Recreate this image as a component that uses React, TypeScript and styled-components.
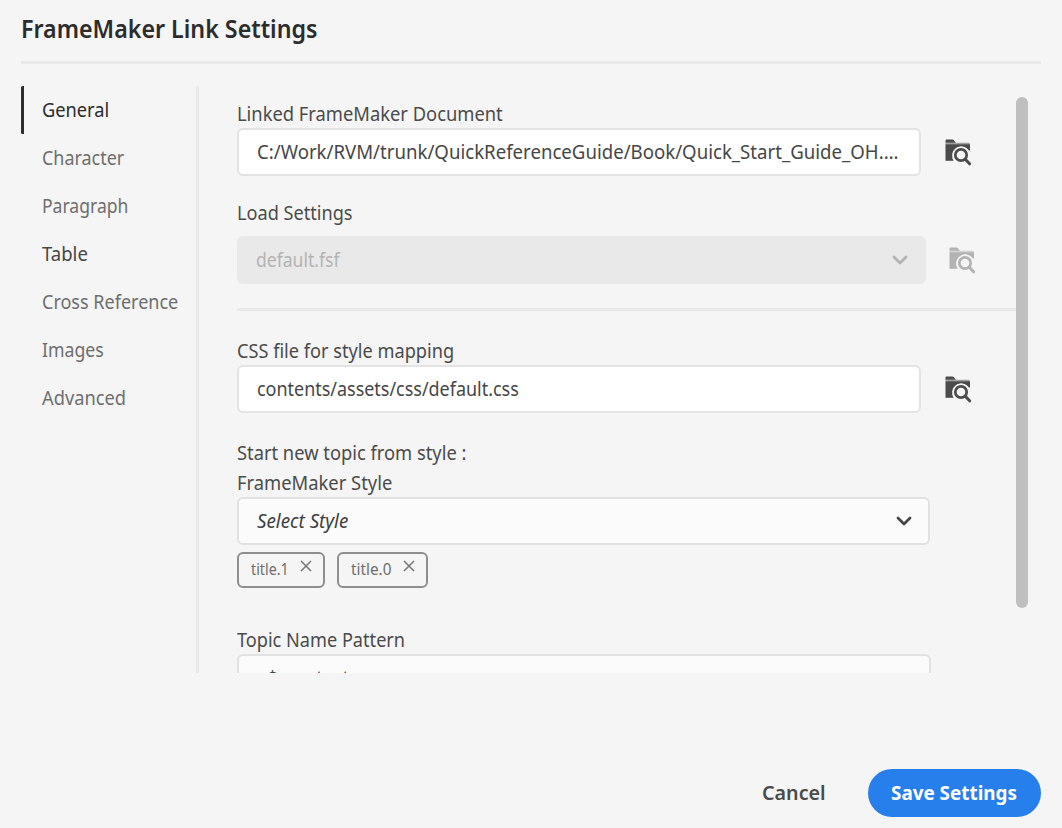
import React from "react";
import styled, { createGlobalStyle } from "styled-components";

const GlobalStyle = createGlobalStyle`
  * { box-sizing: border-box; }
  body {
    margin: 0;
    background: #f5f5f5;
    font-family: "Noto Sans", "Open Sans", sans-serif;
    font-size: 19.5px;
    color: #4b4b4b;
  }
`;

const Dialog = styled.main`
  width: 1062px;
  height: 828px;
  padding: 0 21px;
  display: flex;
  flex-direction: column;
  background: #f5f5f5;
  overflow: hidden;
`;

/* Condensed run of text: the face is narrowed horizontally by $k. */
const Text = styled.span<{ $k: number }>`
  display: inline-block;
  white-space: pre;
  transform: scaleX(${(p) => p.$k});
  transform-origin: left center;
`;

const Title = styled.h1`
  margin: 0;
  height: 64px;
  border-bottom: 3px solid #e9e9e9;
  font-size: 25px;
  font-weight: 600;
  line-height: 56px;
  color: #2c2c2c;
`;

const Body = styled.div`
  display: flex;
  height: 587px;
  margin-top: 22px;
`;

const Nav = styled.nav`
  width: 175px;
  flex: none;
`;

const NavItem = styled.a<{ $active?: boolean; $dark?: boolean }>`
  display: block;
  height: 48px;
  padding-left: 21px;
  line-height: 48px;
  color: ${(p) => (p.$active ? "#2c2c2c" : p.$dark ? "#464646" : "#6e6e6e")};
  background: ${(p) =>
    p.$active ? "linear-gradient(#2c2c2c, #2c2c2c) left / 3px 100% no-repeat" : "none"};
  border-radius: 1.5px;
`;

const Panel = styled.section`
  width: 820px;
  flex: none;
  padding: 12px 0 0 38px;
  border-left: 3px solid #e9e9e9;
  overflow: hidden;
`;

const Label = styled.div<{ $top?: number }>`
  height: 30px;
  line-height: 32px;
  margin-top: ${(p) => p.$top ?? 0}px;
  color: #4b4b4b;
`;

const Row = styled.div<{ $gap?: number; $top?: number }>`
  display: flex;
  align-items: center;
  gap: ${(p) => p.$gap ?? 24}px;
  margin-top: ${(p) => p.$top ?? 0}px;
`;

const Input = styled.div`
  width: 684px;
  height: 48px;
  padding-left: 18px;
  border: 2px solid #e3e3e3;
  border-radius: 6px;
  background: #fff;
  line-height: 44px;
  color: #464646;
`;

const Select = styled.div<{ $width: number; $disabled?: boolean }>`
  display: flex;
  align-items: center;
  justify-content: space-between;
  width: ${(p) => p.$width}px;
  height: 48px;
  padding: 0 16px 0 ${(p) => (p.$disabled ? 17 : 18)}px;
  border: 2px solid ${(p) => (p.$disabled ? "#e9e9e9" : "#e1e1e1")};
  border-radius: 6px;
  background: ${(p) => (p.$disabled ? "#e9e9e9" : "#fbfbfb")};
  line-height: ${(p) => (p.$disabled ? 42 : 44)}px;
  color: ${(p) => (p.$disabled ? "#b3b3b3" : "#3f3f3f")};
`;

const Placeholder = styled.em`
  line-height: 44px;
`;

const Divider = styled.hr`
  width: 779px;
  height: 3px;
  margin: 24px 0 0;
  border: 0;
  background: #e9e9e9;
`;

const Chips = styled.div`
  display: flex;
  gap: 12px;
  margin-top: 7px;
`;

const Chip = styled.div<{ $width: number }>`
  display: flex;
  justify-content: space-between;
  width: ${(p) => p.$width}px;
  height: 36px;
  padding: 0 11px 0 12px;
  border: 2px solid #8e8e8e;
  border-radius: 6px;
  font-size: 17px;
  line-height: 30px;
  color: #6e6e6e;
`;

const ChipLabel = styled.span`
  width: 42px;
`;

const Cross = styled.svg`
  flex: none;
  margin-top: 6px;
`;

const ScrollTrack = styled.div`
  width: 12px;
  padding-top: 11px;
  flex: none;
`;

const ScrollThumb = styled.div`
  height: 511px;
  border-radius: 6px;
  background: #bfbfbf;
`;

const Footer = styled.footer`
  display: flex;
  justify-content: flex-end;
  align-items: center;
  gap: 42px;
  margin-top: 95px;
  height: 49px;
  font-size: 20px;
`;

const CancelButton = styled.button`
  width: 64px;
  padding: 0;
  border: 0;
  background: none;
  font: inherit;
  font-weight: 600;
  text-align: left;
  color: #4b4b4b;
`;

const SaveButton = styled.button`
  width: 173px;
  height: 48px;
  padding: 0 0 0 23px;
  border: 0;
  border-radius: 24px;
  background: #267fea;
  font: inherit;
  font-weight: 700;
  text-align: left;
  color: #fff;
`;

const BrowseIcon = ({ color }: { color: string }) => (
  <svg width="27" height="27" viewBox="0 0 27 27" fill="none">
    <path d="M0.5 3.7V1.5Q0.5 .4 1.6 .4H7.4Q8.3 .4 8.9 1.2L10.8 3.7Z" fill={color} />
    <path d="M0.5 5.2H25V21.8H0.5Z" fill={color} />
    <path d="M0.5 3.7H24Q25 3.7 25 5.2H0.5Z" fill={color} opacity=".5" />
    <path d="M25 11.5V22.5H10.1L8.7 21.9A9 9 0 1 1 24 11.6Z" fill="#f5f5f5" />
    <circle cx="16" cy="16" r="8.4" fill="#f5f5f5" />
    <circle cx="16" cy="16" r="5.7" stroke={color} strokeWidth="2.7" />
    <path d="M20.3 20.3L24.6 24.8" stroke={color} strokeWidth="3" strokeLinecap="round" />
  </svg>
);

const Chevron = ({ color }: { color: string }) => (
  <svg width="16" height="12" viewBox="0 0 16 12" fill="none">
    <path d="M2 3L8 9L14 3" stroke={color} strokeWidth="2.8" strokeLinecap="round" strokeLinejoin="round" />
  </svg>
);

const RemoveIcon = () => (
  <Cross width="12" height="12" viewBox="0 0 12 12">
    <path d="M1 1L11 11M11 1L1 11" stroke="#777" strokeWidth="1.5" />
  </Cross>
);

const navItems = [
  { name: "General", k: 0.935, active: true },
  { name: "Character", k: 0.92 },
  { name: "Paragraph", k: 0.9 },
  { name: "Table", k: 0.95, dark: true },
  { name: "Cross Reference", k: 0.924 },
  { name: "Images", k: 0.905 },
  { name: "Advanced", k: 0.937 },
];

export default function App() {
  return (
    <Dialog>
      <GlobalStyle />
      <Title>
        <Text $k={0.929}>FrameMaker Link Settings</Text>
      </Title>
      <Body>
        <Nav>
          {navItems.map((n) => (
            <NavItem key={n.name} $active={n.active} $dark={n.dark}>
              <Text $k={n.k}>{n.name}</Text>
            </NavItem>
          ))}
        </Nav>
        <Panel>
          <Label>
            <Text $k={0.94}>Linked FrameMaker Document</Text>
          </Label>
          <Row>
            <Input>
              <Text $k={0.955}>C:/Work/RVM/trunk/QuickReferenceGuide/Book/Quick_Start_Guide_OH.…</Text>
            </Input>
            <BrowseIcon color="#4b4b4b" />
          </Row>
          <Label $top={21}>
            <Text $k={0.93}>Load Settings</Text>
          </Label>
          <Row $gap={23} $top={9}>
            <Select $width={689} $disabled>
              <Text $k={0.9}>default.fsf</Text>
              <Chevron color="#b3b3b3" />
            </Select>
            <BrowseIcon color="#b3b3b3" />
          </Row>
          <Divider />
          <Label $top={24}>
            <Text $k={0.932}>CSS file for style mapping</Text>
          </Label>
          <Row>
            <Input>
              <Text $k={0.92}>contents/assets/css/default.css</Text>
            </Input>
            <BrowseIcon color="#4b4b4b" />
          </Row>
          <Label $top={24}>
            <Text $k={0.939}>Start new topic from style :</Text>
          </Label>
          <Label>
            <Text $k={0.942}>FrameMaker Style</Text>
          </Label>
          <Select $width={693}>
            <Placeholder>
              <Text $k={0.962}>Select Style</Text>
            </Placeholder>
            <Chevron color="#464646" />
          </Select>
          <Chips>
            <Chip $width={88}>
              <ChipLabel>
                <Text $k={0.84}>title.1</Text>
              </ChipLabel>
              <RemoveIcon />
            </Chip>
            <Chip $width={91}>
              <ChipLabel>
                <Text $k={0.9}>title.0</Text>
              </ChipLabel>
              <RemoveIcon />
            </Chip>
          </Chips>
          <Label $top={36}>
            <Text $k={0.93}>Topic Name Pattern</Text>
          </Label>
          <Select $width={694}>
            <Text $k={0.93}>{"<$paratext>"}</Text>
          </Select>
        </Panel>
        <ScrollTrack>
          <ScrollThumb />
        </ScrollTrack>
      </Body>
      <Footer>
        <CancelButton>
          <Text $k={0.985}>Cancel</Text>
        </CancelButton>
        <SaveButton>
          <Text $k={0.943}>Save Settings</Text>
        </SaveButton>
      </Footer>
    </Dialog>
  );
}
